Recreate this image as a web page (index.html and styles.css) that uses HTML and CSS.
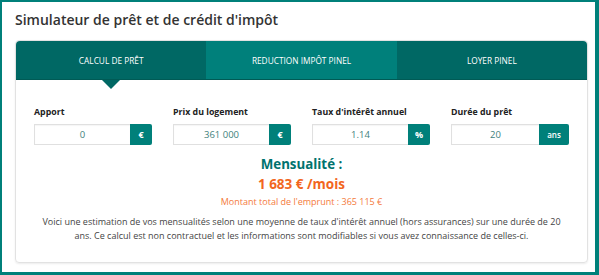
FILE: index.html
```html
<!DOCTYPE html>
<html lang="fr">
<head>
  <meta charset="UTF-8">
  <title>Simulateur de prêt</title>
  <link rel="stylesheet" href="styles.css">
</head>
<body>

<div class="sim-frame">
  <h1 class="sim-title">Simulateur de prêt et de crédit d'impôt</h1>

  <div class="sim-card">
    <!-- Onglets -->
    <div class="tabs">
      <div class="tab active">CALCUL DE PRÊT</div>
      <div class="tab hover">REDUCTION IMPÔT PINEL</div>
      <div class="tab">LOYER PINEL</div>
    </div>

    <div class="sim-body">
      <div class="fields">
        <div class="field">
          <label>Apport</label>
          <div class="input-group">
            <div class="input">0</div>
            <div class="addon">€</div>
          </div>
        </div>
        <div class="field">
          <label>Prix du logement</label>
          <div class="input-group">
            <div class="input">361 000</div>
            <div class="addon">€</div>
          </div>
        </div>
        <div class="field">
          <label>Taux d'intérêt annuel</label>
          <div class="input-group">
            <div class="input">1.14</div>
            <div class="addon">%</div>
          </div>
        </div>
        <div class="field">
          <label>Durée du prêt</label>
          <div class="input-group">
            <div class="input">20</div>
            <div class="addon wide">ans</div>
          </div>
        </div>
      </div>

      <!-- Résultat -->
      <div class="result">
        <div class="result-label">Mensualité :</div>
        <div class="result-value">1 683 € /mois</div>
        <div class="result-total">Montant total de l'emprunt : 365 115 €</div>
        <p class="result-note">Voici une estimation de vos mensualités selon une moyenne de taux d'intérêt annuel (hors assurances) sur une durée de 20 ans. Ce calcul est non contractuel et les informations sont modifiables si vous avez connaissance de celles-ci.</p>
      </div>
    </div>
  </div>
</div>

</body>
</html>
```

FILE: styles.css
```css
* {
  box-sizing: border-box;
  font-family: "Open Sans", Arial, sans-serif;
}
body {
  margin: 0;
  background-color: #fff;
}
.sim-frame {
  width: 599px;
  height: 275px;
  border-style: solid;
  border-color: #00807a;
  border-width: 2px 4px 3px 2px;
  padding: 9px 7px 0 13px;
}
.sim-title {
  margin: 0 0 11px 0;
  font-size: 14px;
  font-weight: 600;
  color: #333;
  line-height: 18px;
}
.sim-card {
  border: 1px solid #e2e2e2;
  border-radius: 4px;
  box-shadow: 0 1px 2px rgba(0,0,0,0.08);
  height: 223px;
}

/* ONGLETS */
.tabs {
  display: flex;
  height: 39px;
  border-radius: 4px 4px 0 0;
  border-bottom: 1px solid #005a55;
}
.tab {
  flex: 1;
  display: flex;
  align-items: center;
  justify-content: center;
  background-color: #006864;
  color: #fff;
  font-size: 8.3px;
  font-weight: 500;
  position: relative;
}
.tab:first-child {
  border-top-left-radius: 4px;
}
.tab:last-child {
  border-top-right-radius: 4px;
}
.tab.hover {
  background-color: #00807b;
}
.tab.active::after {
  content: "";
  position: absolute;
  left: 50%;
  bottom: -10px;
  margin-left: -9px;
  border-left: 9px solid transparent;
  border-right: 9px solid transparent;
  border-top: 9px solid #006864;
}

.sim-body {
  padding: 26px 18px 0 18px;
}
.fields {
  display: grid;
  grid-template-columns: repeat(4, 118px);
  column-gap: 21px;
}
.field label {
  display: block;
  font-size: 8.8px;
  font-weight: 700;
  color: #222;
  line-height: 12px;
  margin-bottom: 6px;
}
.input-group {
  display: flex;
  height: 21px;
}
.input {
  flex: 1;
  border: 1px solid #e0e0e0;
  border-right: none;
  box-shadow: inset 0 1px 1px rgba(0,0,0,0.04);
  text-align: center;
  font-size: 9.5px;
  line-height: 19px;
  color: #3f7f7c;
}
.addon {
  width: 22px;
  background-color: #00807a;
  color: #fff;
  border-radius: 0 2px 2px 0;
  font-size: 9px;
  font-weight: 700;
  text-align: center;
  line-height: 21px;
}
.addon.wide {
  width: 30px;
  font-size: 8px;
  font-weight: 600;
}

/* RÉSULTAT */
.result {
  text-align: center;
  margin-top: 10px;
}
.result-label {
  font-size: 13.3px;
  font-weight: 700;
  color: #00736e;
  line-height: 18px;
}
.result-value {
  font-size: 13.5px;
  font-weight: 700;
  color: #f2661e;
  line-height: 22px;
}
.result-total {
  font-size: 9px;
  color: #f47a3c;
  line-height: 14px;
}
.result-note {
  margin: 6px 0 0 0;
  font-size: 9px;
  line-height: 14px;
  color: #444;
}
```
